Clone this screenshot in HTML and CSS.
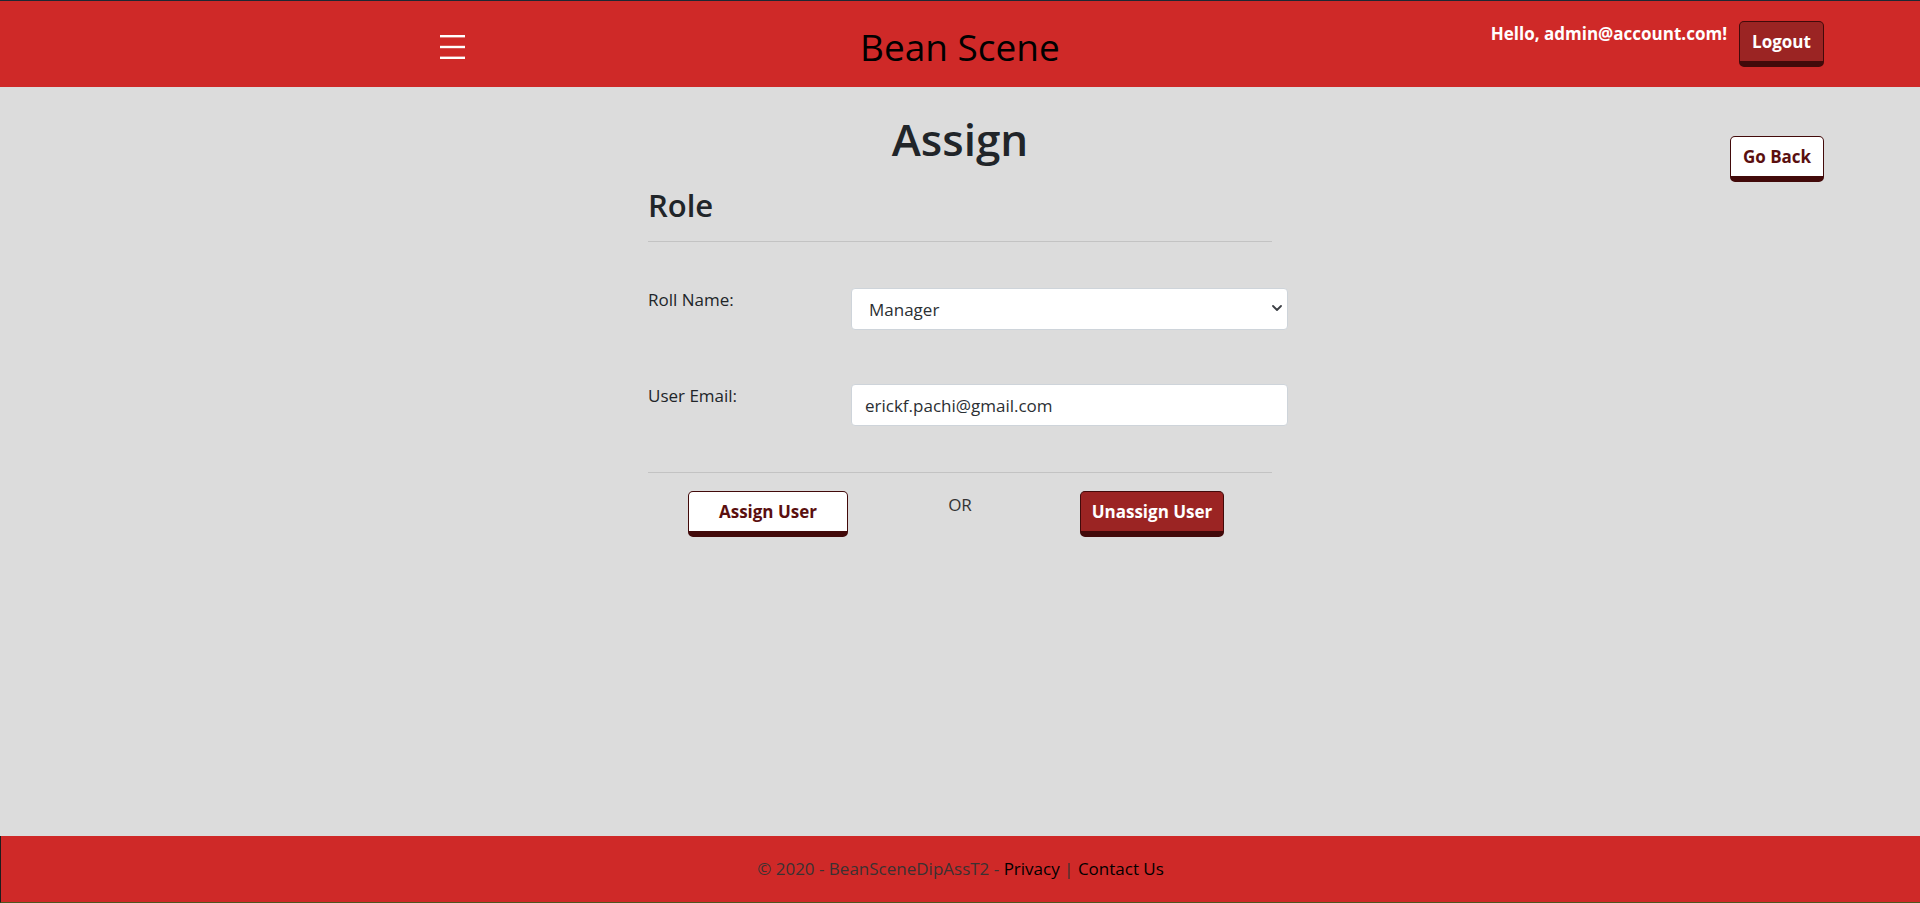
FILE: index.html
```html
<!DOCTYPE html>
<html lang="en">
<head>
<meta charset="utf-8">
<title>Assign - Bean Scene</title>
<link rel="stylesheet" href="styles.css">
</head>
<body>
<header class="topbar">
  <button class="menu-toggle" type="button" aria-label="Toggle menu">
    <svg width="25" height="24" viewBox="0 0 25 24"><rect x="0" y="0" width="25" height="2.4" fill="#fff"/><rect x="0" y="10.8" width="25" height="2.4" fill="#fff"/><rect x="0" y="21.6" width="25" height="2.4" fill="#fff"/></svg>
  </button>
  <a class="brand" href="#">Bean Scene</a>
  <div class="user-area">
    <span class="greeting">Hello, admin@account.com!</span>
    <button class="btn btn-dark btn-logout" type="button">Logout</button>
  </div>
</header>

<main class="page">
  <section class="content">
    <h1 class="page-title">Assign</h1>
    <h2 class="section-title">Role</h2>
    <hr class="rule rule-top">
    <form class="assign-form">
      <div class="field field-role">
        <label class="field-label" for="role">Roll Name:</label>
        <div class="select-wrap">
          <select id="role" class="control control-select">
            <option>Manager</option>
          </select>
          <svg class="chevron" width="10" height="6" viewBox="0 0 10 6"><polyline points="1,1 5,5 9,1" fill="none" stroke="#3c3f44" stroke-width="1.8" stroke-linecap="round" stroke-linejoin="round"/></svg>
        </div>
      </div>
      <div class="field field-email">
        <label class="field-label" for="email">User Email:</label>
        <input id="email" class="control" type="text" value="erickf.pachi@gmail.com">
      </div>
      <hr class="rule rule-bottom">
      <div class="actions">
        <button class="btn btn-light btn-assign" type="button">Assign User</button>
        <span class="or">OR</span>
        <button class="btn btn-dark btn-unassign" type="button">Unassign User</button>
      </div>
    </form>
  </section>
  <div class="aside">
    <a class="btn btn-light btn-back" href="#">Go Back</a>
  </div>
</main>

<footer class="footer">
  <span class="muted">© 2020 - BeanSceneDipAssT2 - </span><a href="#" class="footer-link">Privacy</a><span class="sep"> | </span><a href="#" class="footer-link">Contact Us</a>
</footer>
</body>
</html>
```
FILE: styles.css
```css
* { box-sizing: border-box; }

html, body { height: 100%; }

body {
  margin: 0;
  min-height: 903px;
  display: flex;
  flex-direction: column;
  background: #dcdcdc;
  color: #212529;
  font-family: "Open Sans", "Noto Sans", sans-serif;
  font-size: 17px;
  line-height: 24px;
}

/* ---------- header ---------- */
.topbar {
  height: 87px;
  flex: none;
  display: flex;
  align-items: center;
  padding: 0 96px 0 440px;
  background: #cf2928;
  border-top: 1px solid #1d2833;
}

.menu-toggle {
  align-self: flex-start;
  margin-top: 34px;
  padding: 0;
  border: 0;
  background: none;
  width: 25px;
  height: 24px;
  display: block;
}
.menu-toggle svg { display: block; }

.brand {
  align-self: flex-start;
  margin-top: 23px;
  margin-left: 395px;
  font-size: 37px;
  line-height: 46px;
  color: #000;
  text-decoration: none;
}

.user-area {
  margin-left: auto;
  display: flex;
  align-items: flex-start;
  align-self: stretch;
}

.greeting {
  margin-top: 21px;
  color: #fff;
  font-weight: 700;
}

.btn {
  display: block;
  height: 46px;
  border: 1px solid #420a0a;
  border-bottom-width: 6px;
  border-radius: 5px;
  padding: 0;
  font-family: inherit;
  font-size: 17px;
  font-weight: 700;
  line-height: 39px;
  text-align: center;
  text-decoration: none;
  cursor: pointer;
}
.btn-dark { background: #9b2423; color: #fff; }
.btn-light { background: #fff; color: #5a0f0f; }

.btn-logout {
  width: 85px;
  margin-left: 12px;
  margin-top: 20px;
}

/* ---------- main ---------- */
.page {
  flex: 1;
  display: grid;
  grid-template-columns: 1fr 624px 1fr;
}

.content { grid-column: 2; }

.aside {
  grid-column: 3;
  display: flex;
  justify-content: flex-end;
  align-items: flex-start;
  padding: 49px 96px 0 0;
}
.btn-back { width: 94px; }

.page-title {
  margin: 25px 0 0;
  text-align: center;
  font-size: 44px;
  line-height: 55px;
  font-weight: 600;
  color: #212529;
}

.section-title {
  margin: 19px 0 0;
  font-size: 31px;
  line-height: 38px;
  font-weight: 600;
  color: #212529;
}

.rule {
  margin: 0;
  border: 0;
  border-top: 1px solid #c3c3c3;
  height: 0;
}
.rule-top { margin-top: 17px; }
.rule-bottom { margin-top: 46px; }

.field {
  display: grid;
  grid-template-columns: 203px 437px;
  align-items: start;
}
.field-role { margin-top: 46px; }
.field-email { margin-top: 54px; }

.field-label { display: block; color: #212529; }

.select-wrap { position: relative; }

.control {
  display: block;
  width: 437px;
  height: 42px;
  margin: 0;
  padding: 0 13px;
  border: 1px solid #ced4da;
  border-radius: 4px;
  background: #fff;
  font-family: inherit;
  font-size: 17px;
  color: #2b2f33;
}
.control-select {
  appearance: none;
  -webkit-appearance: none;
  padding-left: 17px;
}
.chevron {
  position: absolute;
  right: 6px;
  top: 17px;
  pointer-events: none;
}

.actions {
  margin-top: 18px;
  display: grid;
  grid-template-columns: repeat(3, 192px);
  justify-content: center;
  justify-items: center;
  align-items: start;
}
.btn-assign { width: 160px; }
.btn-unassign { width: 144px; }
.or {
  margin-top: 2px;
  color: #333;
}

/* ---------- footer ---------- */
.footer {
  flex: none;
  height: 67px;
  background: #cf2928;
  border-left: 1px solid #1d1d1d;
  border-bottom: 1px solid #4e561d;
  text-align: center;
  line-height: 66px;
  font-size: 17px;
}
.muted { color: #3a3232; }
.sep { color: #3a3232; }
.footer-link { color: #000; text-decoration: none; }
```
